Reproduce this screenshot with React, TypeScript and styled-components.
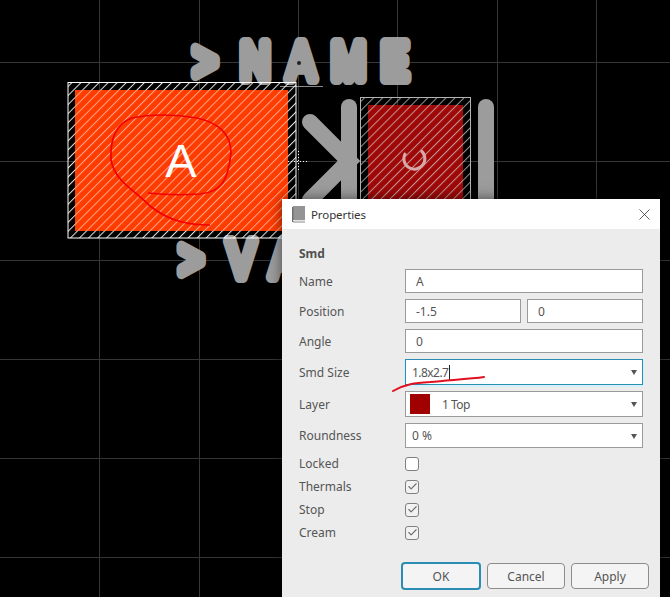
import React from 'react';
import styled, { createGlobalStyle } from 'styled-components';
import { Check, X } from 'lucide-react';

const GlobalStyle = createGlobalStyle`
  html, body {
    margin: 0;
    padding: 0;
    background: #000000;
  }
  body {
    font-family: "Noto Sans", "Open Sans", sans-serif;
    overflow: hidden;
  }
`;

const Page = styled.div`
  position: relative;
  width: 670px;
  height: 597px;
  background: #000000;
  overflow: hidden;
`;

const BoardSvg = styled.svg`
  display: block;
  width: 670px;
  height: 597px;
`;

const Marker = styled.svg`
  position: absolute;
  left: 385px;
  top: 370px;
  width: 110px;
  height: 30px;
`;

const Dialog = styled.section`
  position: absolute;
  left: 282px;
  top: 199px;
  width: 378px;
  height: 398px;
  background: #ececec;
  box-shadow: 0 0 12px rgba(0, 0, 0, 0.55);
  display: flex;
  flex-direction: column;
`;

const TitleBar = styled.header`
  height: 30px;
  background: #ffffff;
  display: flex;
  align-items: center;
  padding: 0 6px 0 10px;
  flex-shrink: 0;
`;

const Title = styled.span`
  margin-left: 6px;
  font-size: 11.5px;
  letter-spacing: -0.1px;
  color: #333333;
  flex: 1;
`;

const CloseButton = styled.button`
  border: none;
  background: none;
  padding: 0;
  display: flex;
  color: #333333;
`;

const Body = styled.div`
  flex: 1;
  padding: 16px 17px 7px 17px;
  display: flex;
  flex-direction: column;
`;

const Heading = styled.h2`
  margin: 0 0 7px 0;
  height: 17px;
  line-height: 17px;
  font-size: 12px;
  font-weight: 700;
  color: #505050;
`;

const Fields = styled.div`
  display: grid;
  grid-template-columns: 106px 1fr;
  row-gap: 6px;
  align-items: center;
`;

const Checks = styled.div`
  display: grid;
  grid-template-columns: 106px 1fr;
  grid-auto-rows: 23px;
  align-items: center;
  margin-top: 4px;
`;

const Label = styled.label`
  font-size: 12px;
  color: #555555;
`;

const Pair = styled.div`
  display: flex;
  gap: 6px;
`;

const Field = styled.div<{ $h?: number; $pad?: number; $focus?: boolean }>`
  position: relative;
  flex: 1;
  box-sizing: border-box;
  height: ${(p) => p.$h ?? 24}px;
  padding: 0 24px 0 ${(p) => p.$pad ?? 10}px;
  background: #ffffff;
  border: 1px solid ${(p) => (p.$focus ? '#2b8db3' : '#9a9a9a')};
  box-shadow: ${(p) => (p.$focus ? '0 1px 0 1px #d4f2fb' : 'none')};
  display: flex;
  align-items: center;
  font-size: 12px;
  color: #555555;
`;

const TightValue = styled.span`
  letter-spacing: -0.55px;
`;

const Caret = styled.span`
  width: 1px;
  height: 15px;
  margin-left: 1px;
  background: #222222;
`;

const Arrow = styled.span`
  position: absolute;
  right: 5px;
  top: 50%;
  margin-top: -2px;
  border-left: 3px solid transparent;
  border-right: 3px solid transparent;
  border-top: 5px solid #555555;
`;

const Swatch = styled.span`
  width: 20px;
  height: 20px;
  margin-right: 12px;
  background: #a00000;
`;

const CheckBox = styled.span<{ $on?: boolean }>`
  box-sizing: border-box;
  width: 14px;
  height: 14px;
  border: 1px solid #808080;
  border-radius: 3px;
  background: ${(p) => (p.$on ? '#f2f2f2' : '#ffffff')};
  display: flex;
  align-items: center;
  justify-content: center;
  color: #6e6e6e;
`;

const Buttons = styled.footer`
  margin-top: auto;
  display: flex;
  gap: 6px;
  padding-left: 102px;
  margin-right: -6px;
  align-items: center;
`;

const Button = styled.button<{ $primary?: boolean }>`
  box-sizing: border-box;
  width: ${(p) => (p.$primary ? 80 : 78)}px;
  height: ${(p) => (p.$primary ? 28 : 26)}px;
  background: #f4f4f4;
  border: ${(p) => (p.$primary ? '2px solid #2b8db3' : '1px solid #8c8c8c')};
  border-radius: 4px;
  font-family: inherit;
  font-size: 12px;
  color: #555555;
  padding: 0;
`;

const gridX = [99, 199, 298, 397, 497, 596];
const gridY = [62, 161, 260, 359, 458, 557];

const boardText = {
  fontFamily: '"Liberation Sans", sans-serif',
  fontSize: 51,
  fill: '#9c9c9c',
  stroke: '#9c9c9c',
  strokeWidth: 11,
  strokeLinejoin: 'round' as const,
  vectorEffect: 'non-scaling-stroke' as const,
  transform: 'scale(0.8 1)',
};

function Board() {
  return (
    <BoardSvg viewBox="0 0 670 597">
      <defs>
        <pattern id="hatch" width="6.4" height="6.4" patternUnits="userSpaceOnUse" patternTransform="rotate(45)">
          <rect width="1" height="6.4" fill="#ffffff" fillOpacity="0.9" />
        </pattern>
        <pattern id="hatchSoft" width="6.4" height="6.4" patternUnits="userSpaceOnUse" patternTransform="rotate(45)">
          <rect width="1" height="6.4" fill="#ffffff" fillOpacity="0.55" />
        </pattern>
        <pattern id="hatchDim" width="6.4" height="6.4" patternUnits="userSpaceOnUse" patternTransform="rotate(45)">
          <rect width="1" height="6.4" fill="#c8c8c8" fillOpacity="0.75" />
        </pattern>
      </defs>

      {gridX.map((x) => (
        <line key={x} x1={x + 0.5} y1={0} x2={x + 0.5} y2={597} stroke="#363636" />
      ))}
      {gridY.map((y) => (
        <line key={y} x1={0} y1={y + 0.5} x2={670} y2={y + 0.5} stroke="#363636" />
      ))}

      <text x="241.6 300.5 359.4 414.4 476.5" y={79} {...boardText}>&gt;NAME</text>
      <text x="224.1 284.4 338" y={277} {...boardText}>&gt;VA</text>
      <circle cx={299} cy={63} r={2} fill="#222222" />
      <line x1={280} y1={86.5} x2={323} y2={86.5} stroke="#8a8a8a" />

      <g stroke="#9c9c9c" strokeWidth={16} strokeLinecap="round" fill="none">
        <polyline points="310,122 349,161 310,200" />
        <line x1={349} y1={107} x2={349} y2={240} />
        <line x1={486} y1={107} x2={486} y2={240} />
      </g>

      <rect x={68} y={82.5} width={228} height={155.5} fill="url(#hatch)" stroke="#ffffff" />
      <rect x={75} y={90} width={213} height={141} fill="#ff3c00" />
      <rect x={75} y={90} width={213} height={141} fill="url(#hatchSoft)" />
      <text x={181} y={177} textAnchor="middle" fontFamily='"Liberation Sans", sans-serif' fontSize={47} fill="#ffffff">A</text>
      <path
        d="M148 193 C165 195 185 195 200 194 C222 192 228 180 231 153 C231 132 215 122 197 118 C175 114 150 114 132 118 C115 124 110 140 111 160 C115 182 135 190 150 206 C170 222 190 225 210 225"
        fill="none"
        stroke="#f20000"
        strokeWidth={1.7}
      />

      <rect x={360.5} y={97.5} width={110} height={150} fill="url(#hatchDim)" stroke="#b4b4b4" />
      <rect x={368} y={105} width={95} height={140} fill="#a00808" />
      <rect x={368} y={105} width={95} height={140} fill="url(#hatchDim)" />
      <path d="M405.5 153 A10.5 10.5 0 1 0 421 150.5" fill="none" stroke="#d8a8a8" strokeWidth={3} />

      <line x1={288} y1={161.5} x2={308} y2={161.5} stroke="#ffffff" strokeDasharray="1 2" />
      <line x1={298.5} y1={151} x2={298.5} y2={172} stroke="#ffffff" strokeDasharray="1 2" />
    </BoardSvg>
  );
}

function BookIcon() {
  return (
    <svg width="13" height="17" viewBox="0 0 13 17">
      <rect x="1" y="0" width="12" height="14" fill="#949494" />
      <rect x="0" y="1" width="1.5" height="15" fill="#6e6e6e" />
      <rect x="1" y="14" width="12" height="1" fill="#e4e4e4" />
      <rect x="1" y="15.5" width="12" height="1" fill="#8a8a8a" />
    </svg>
  );
}

export default function App() {
  return (
    <Page>
      <GlobalStyle />
      <Board />
      <Dialog>
        <TitleBar>
          <BookIcon />
          <Title>Properties</Title>
          <CloseButton>
            <X size={19} strokeWidth={1} />
          </CloseButton>
        </TitleBar>
        <Body>
          <Heading>Smd</Heading>
          <Fields>
            <Label>Name</Label>
            <Field>A</Field>
            <Label>Position</Label>
            <Pair>
              <Field>-1.5</Field>
              <Field>0</Field>
            </Pair>
            <Label>Angle</Label>
            <Field>0</Field>
            <Label>Smd Size</Label>
            <Field $h={26} $pad={6} $focus>
              <TightValue>1.8x2.7</TightValue>
              <Caret />
              <Arrow />
            </Field>
            <Label>Layer</Label>
            <Field $h={26} $pad={4}>
              <Swatch />
              <TightValue>1 Top</TightValue>
              <Arrow />
            </Field>
            <Label>Roundness</Label>
            <Field $h={25} $pad={6}>
              0 %
              <Arrow />
            </Field>
          </Fields>
          <Checks>
            <Label>Locked</Label>
            <CheckBox />
            <Label>Thermals</Label>
            <CheckBox $on>
              <Check size={11} strokeWidth={2.5} />
            </CheckBox>
            <Label>Stop</Label>
            <CheckBox $on>
              <Check size={11} strokeWidth={2.5} />
            </CheckBox>
            <Label>Cream</Label>
            <CheckBox $on>
              <Check size={11} strokeWidth={2.5} />
            </CheckBox>
          </Checks>
          <Buttons>
            <Button $primary>OK</Button>
            <Button>Cancel</Button>
            <Button>Apply</Button>
          </Buttons>
        </Body>
      </Dialog>
      <Marker viewBox="0 0 110 30">
        <path d="M8 21 C20 14 30 13 45 12 C65 10 85 9 99 7" fill="none" stroke="#e01020" strokeWidth={2} strokeLinecap="round" />
      </Marker>
    </Page>
  );
}
